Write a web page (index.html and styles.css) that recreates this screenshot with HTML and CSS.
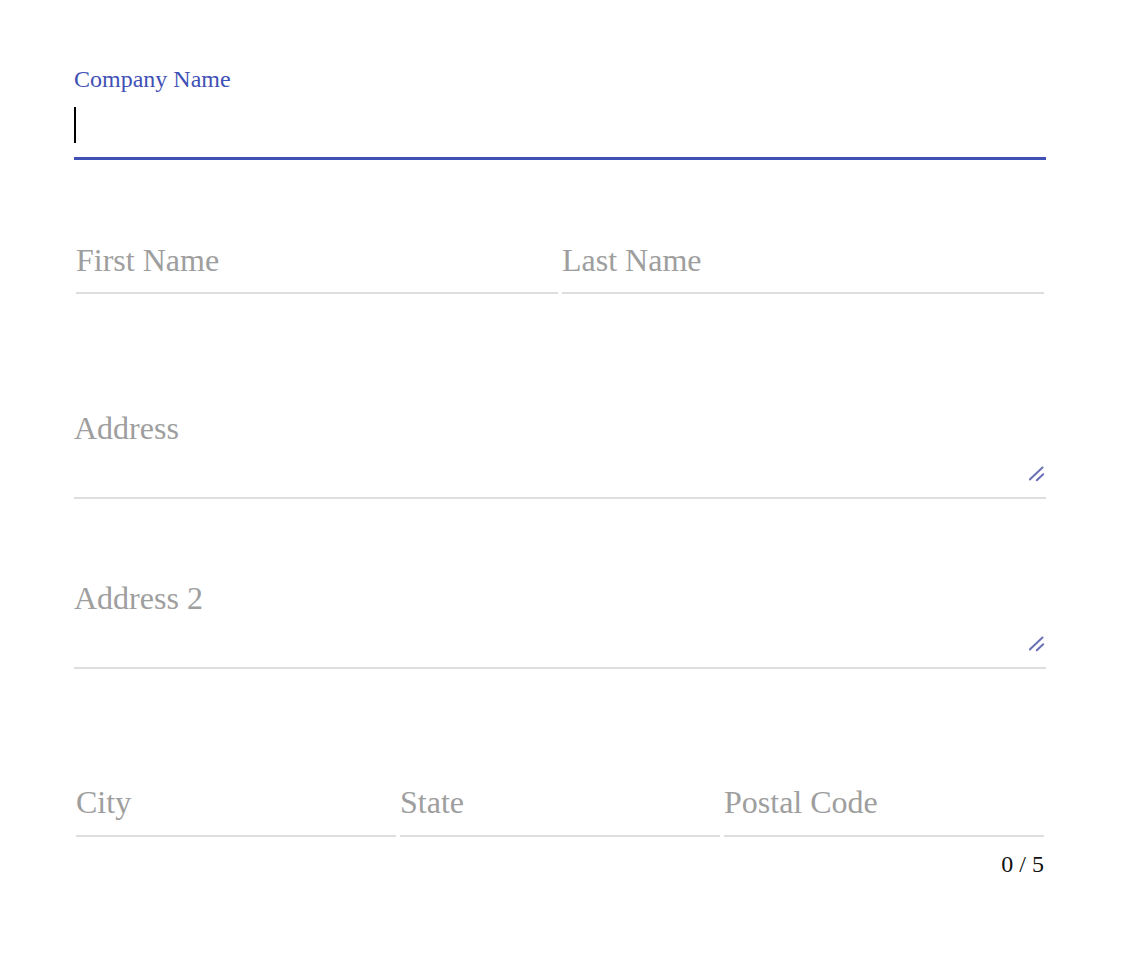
FILE: index.html
```html
<!DOCTYPE html>
<html lang="en">
<head>
<meta charset="utf-8">
<title>Company form</title>
<link rel="stylesheet" href="styles.css">
</head>
<body>
<form class="form">
  <div class="field field-focused">
    <label class="float-label">Company Name</label>
    <div class="control"><span class="caret"></span></div>
    <div class="underline underline-focus"></div>
  </div>

  <div class="row row-names">
    <div class="field cell">
      <div class="control placeholder">First Name</div>
      <div class="underline"></div>
    </div>
    <div class="field cell">
      <div class="control placeholder">Last Name</div>
      <div class="underline"></div>
    </div>
  </div>

  <div class="field field-area field-address">
    <div class="control control-area placeholder">Address
      <svg class="grip" width="16" height="16" viewBox="0 0 16 16" aria-hidden="true">
        <line x1="0.8" y1="13.5" x2="13.5" y2="1.5" />
        <line x1="7.8" y1="14.2" x2="14.2" y2="8.2" />
      </svg>
    </div>
    <div class="underline"></div>
  </div>

  <div class="field field-area field-address2">
    <div class="control control-area placeholder">Address 2
      <svg class="grip" width="16" height="16" viewBox="0 0 16 16" aria-hidden="true">
        <line x1="0.8" y1="13.5" x2="13.5" y2="1.5" />
        <line x1="7.8" y1="14.2" x2="14.2" y2="8.2" />
      </svg>
    </div>
    <div class="underline"></div>
  </div>

  <div class="row row-city">
    <div class="field cell">
      <div class="control placeholder">City</div>
      <div class="underline"></div>
    </div>
    <div class="field cell">
      <div class="control placeholder">State</div>
      <div class="underline"></div>
    </div>
    <div class="field cell">
      <div class="control placeholder">Postal Code</div>
      <div class="underline"></div>
    </div>
  </div>
  <div class="counter">0 / 5</div>
</form>
</body>
</html>
```

FILE: styles.css
```css
html, body {
  margin: 0;
  padding: 0;
  background: #ffffff;
}

body {
  font-family: "Liberation Serif", "Times New Roman", serif;
  font-size: 32px;
}

.form {
  width: 972px;
  padding: 65px 0 0 74px;
  display: flex;
  flex-direction: column;
}

.field {
  display: flex;
  flex-direction: column;
}

.float-label {
  font-size: 24px;
  line-height: 28px;
  height: 28px;
  color: #3f51b5;
}

.control {
  box-sizing: border-box;
  height: 36px;
  line-height: 36px;
  position: relative;
}

.field-focused .control {
  margin-top: 14px;
}

.caret {
  display: block;
  width: 2px;
  height: 36px;
  background: #000000;
}

.placeholder {
  color: #9e9e9e;
  white-space: nowrap;
}

.underline {
  height: 2px;
  margin-top: 13px;
  background: #dedede;
}

.underline-focus {
  height: 3px;
  margin-top: 14px;
  background: #3f51b5;
}

.row {
  display: flex;
}

.cell {
  flex: 1 1 0;
  margin: 0 2px;
}

.row-names {
  margin-top: 83px;
}

.row-names .control {
  line-height: 35px;
}

.field-address {
  margin-top: 115px;
}

.field-address2 {
  margin-top: 80px;
}

.control-area {
  height: 74px;
  padding-top: 1px;
}

.field-area .underline {
  margin-top: 14px;
}

.grip {
  position: absolute;
  right: 1px;
  bottom: 1px;
  stroke: #6870b6;
  stroke-width: 2;
  stroke-linecap: round;
}

.row-city {
  margin-top: 117px;
}

.row-city .control {
  line-height: 32px;
}

.counter {
  margin-top: 13px;
  padding-right: 2px;
  font-size: 24px;
  line-height: 28px;
  text-align: right;
  color: #111111;
}
```
